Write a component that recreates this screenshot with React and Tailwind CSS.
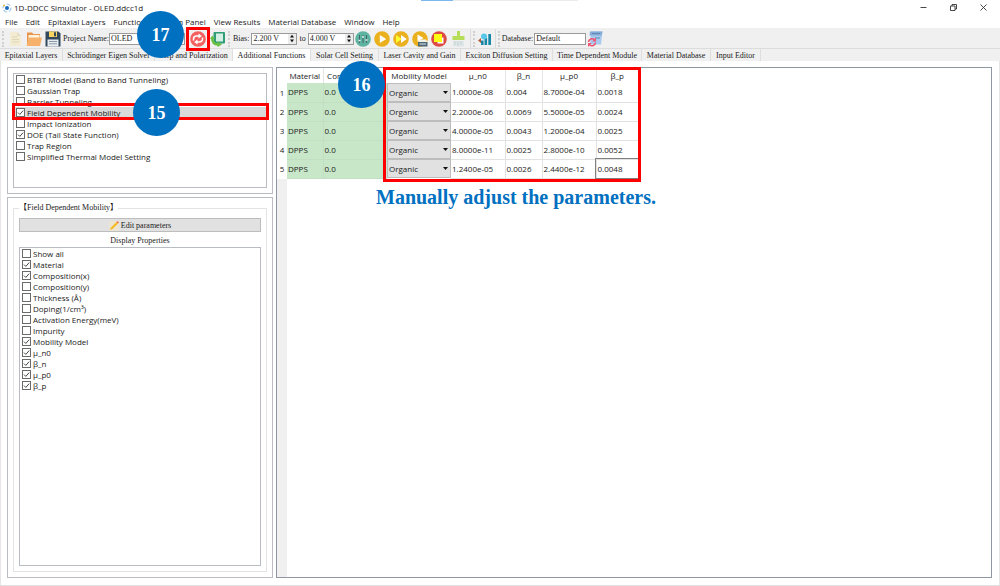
import React, { useState } from 'react';

const menus = [
  'File', 'Edit', 'Epitaxial Layers', 'Functions', 'Design Panel',
  'View Results', 'Material Database', 'Window', 'Help'
];

const tabs = [
  { label: 'Epitaxial Layers', width: 'w-[63px]' },
  { label: 'Schrödinger Eigen Solver', width: 'w-[92px]' },
  { label: 'Step and Polarization', width: 'w-[78px]' },
  { label: 'Additional Functions', width: 'w-[78px]' },
  { label: 'Solar Cell Setting', width: 'w-[68px]' },
  { label: 'Laser Cavity and Gain', width: 'w-[82px]' },
  { label: 'Exciton Diffusion Setting', width: 'w-[92px]' },
  { label: 'Time Dependent Module', width: 'w-[89px]' },
  { label: 'Material Database', width: 'w-[69px]' },
  { label: 'Input Editor', width: 'w-[50px]' }
];

const functionList = [
  { label: 'BTBT Model (Band to Band Tunneling)', checked: false },
  { label: 'Gaussian Trap', checked: false },
  { label: 'Barrier Tunneling', checked: false },
  { label: 'Field Dependent Mobility', checked: true, step: '15' },
  { label: 'Impact Ionization', checked: false },
  { label: 'DOE (Tail State Function)', checked: true },
  { label: 'Trap Region', checked: false },
  { label: 'Simplified Thermal Model Setting', checked: false }
];

const propertyList = [
  { label: 'Show all', checked: false },
  { label: 'Material', checked: true },
  { label: 'Composition(x)', checked: true },
  { label: 'Composition(y)', checked: false },
  { label: 'Thickness (Å)', checked: false },
  { label: 'Doping(1/cm³)', checked: false },
  { label: 'Activation Energy(meV)', checked: false },
  { label: 'Impurity', checked: false },
  { label: 'Mobility Model', checked: true },
  { label: 'μ_n0', checked: true },
  { label: 'β_n', checked: true },
  { label: 'μ_p0', checked: true },
  { label: 'β_p', checked: true }
];

const layers = [
  { material: 'DPPS', comp: '0.0', values: ['1.0000e-08', '0.004', '8.7000e-04', '0.0018'] },
  { material: 'DPPS', comp: '0.0', values: ['2.2000e-06', '0.0069', '5.5000e-05', '0.0024'] },
  { material: 'DPPS', comp: '0.0', values: ['4.0000e-05', '0.0043', '1.2000e-04', '0.0025'] },
  { material: 'DPPS', comp: '0.0', values: ['8.0000e-11', '0.0025', '2.8000e-10', '0.0052'] },
  { material: 'DPPS', comp: '0.0', values: ['1.2400e-05', '0.0026', '2.4400e-12', '0.0048'] }
];

const Step = ({ n, className }) => (
  <div className={`absolute z-20 flex size-[47px] items-center justify-center rounded-full bg-[#0070c0] font-['Liberation_Serif',serif] text-[18px] font-bold text-white ${className}`}>
    {n}
  </div>
);

const CheckRow = ({ item }) => {
  const [checked, setChecked] = useState(item.checked);
  return (
    <li className={`relative ${item.step ? 'bg-[#d9d9d9]' : ''}`}>
      <label className="flex h-[11px] items-center gap-[2px] pl-[2px] whitespace-nowrap">
        <span className="relative size-[9px] shrink-0">
          <input
            type="checkbox"
            checked={checked}
            onChange={(e) => setChecked(e.target.checked)}
            className="peer block size-[9px] appearance-none border border-[#6a6a6a] bg-white"
          />
          <svg viewBox="0 0 9 9" className="pointer-events-none absolute inset-0 hidden size-[9px] peer-checked:block">
            <path d="M2 4.6 3.8 6.4 7.2 2.6" fill="none" stroke="#333" strokeWidth="0.9" />
          </svg>
        </span>
        {item.label}
      </label>
      {item.step && (
        <>
          <div className="pointer-events-none absolute -top-[4px] -right-[3px] -bottom-[2px] -left-[2px] z-10 border-[3px] border-[#ff0000]" />
          <Step n={item.step} className="-top-[18px] left-[119px]" />
        </>
      )}
    </li>
  );
};

const Grip = () => (
  <span className="h-[16px] w-[3px] shrink-0 border-l-2 border-dotted border-[#d0d0d0]" />
);

const Spin = ({ value, label }) => (
  <span className="flex h-[12px] w-[46px] shrink-0 border border-[#9a9a9a] bg-white">
    <input aria-label={label} defaultValue={value} className="w-0 min-w-0 flex-1 px-px outline-none" />
    <span className="flex w-[8px] flex-col bg-[#ececec]">
      <button aria-label="Increase" className="flex flex-1 items-center justify-center">
        <svg viewBox="0 0 6 4" className="h-[4px] w-[6px]"><path d="M1 3.5 3 .8 5 3.5Z" fill="#111" /></svg>
      </button>
      <button aria-label="Decrease" className="flex flex-1 items-center justify-center">
        <svg viewBox="0 0 6 4" className="h-[4px] w-[6px]"><path d="M1 .5 3 3.2 5 .5Z" fill="#111" /></svg>
      </button>
    </span>
  </span>
);

const ToolButton = ({ label, children }) => (
  <button aria-label={label} className="size-[16px] shrink-0">
    <svg viewBox="0 0 16 16" className="size-[16px]">{children}</svg>
  </button>
);

const NewIcon = () => (
  <>
    <path d="M3 1h7l4 4v10H3z" fill="#f3ecd2" />
    <path d="M10 1l4 4h-4z" fill="#e3dcc0" />
    <path d="M5 6h5M5 8.5h7M5 11h7" stroke="#ddd5b6" />
  </>
);

const FolderIcon = () => (
  <>
    <path d="M1 1.5h5l1.5 1.5H14v11H1z" fill="#e8954b" />
    <path d="M2.5 4h11v5h-11z" fill="#fff3dc" />
    <path d="M2.8 6.5H16L14 15H.5z" fill="#f6b26b" />
  </>
);

const SaveIcon = () => (
  <>
    <path d="M.5.5h13l2 2v13H.5z" fill="#34495e" />
    <path d="M4 .5h8v5.5H4z" fill="#f7d560" />
    <path d="M9 1.2h2v4H9z" fill="#34495e" />
    <path d="M2.5 8.5h11v7h-11z" fill="#e8edf2" />
    <path d="M4 10.5h8M4 12.8h8" stroke="#8a98a8" />
  </>
);

const RefreshIcon = () => (
  <>
    <circle cx="8" cy="8" r="7.8" fill="#f4605f" />
    <path d="M3.5 9.5V8a3 3 0 0 1 3-3H9M12.5 6.5V8a3 3 0 0 1-3 3H7" fill="none" stroke="#fff" strokeWidth="1.5" />
    <path d="M8.5 2.5 11.8 5 8.5 7.5zM7.5 8.5 4.2 11l3.3 2.5z" fill="#fff" />
  </>
);

const ReloadIcon = () => (
  <>
    <rect x="3.5" y="1" width="11.5" height="11.5" rx="1" fill="#2f9d78" />
    <rect x="6" y="2.5" width="7" height="8" fill="#d6efe4" />
    <path d="M2.2 7c0 4.500 2.500 6.500 6 6.500" fill="none" stroke="#67bf3f" strokeWidth="2.4" />
    <path d="M7.5 10.5 12 13.5 7.5 16zM0 8l2.300-3.500L4.800 8z" fill="#67bf3f" />
  </>
);

const SettingsIcon = () => (
  <>
    <circle cx="8" cy="8" r="7.8" fill="#5fb3a1" />
    <path d="M4.5 4v8M8 4v8M11.5 4v8" stroke="#44646c" strokeWidth="1" />
    <path d="M3.5 9.5h2M7 6h2M10.5 9h2" stroke="#e4efed" strokeWidth="1.5" />
  </>
);

const PlayIcon = () => (
  <>
    <circle cx="8" cy="8" r="7.8" fill="#eab01e" />
    <path d="M5.8 4v8l6.4-4z" fill="#fff" />
  </>
);

const ForwardIcon = () => (
  <>
    <circle cx="8" cy="8" r="7.8" fill="#eab01e" />
    <path d="M8 4v8l5.8-4z" fill="#fff" />
    <path d="M3 4v8l5.800-4z" fill="#ffff2e" />
  </>
);

const PlayListIcon = () => (
  <>
    <circle cx="8" cy="8" r="7.8" fill="#eab01e" />
    <path d="M5.5 3.5v7l6-3.500z" fill="#fff" />
    <path d="M6 11l1.5-2.500H14l1.500 2.500z" fill="#f1f1e6" />
    <path d="M6 11h9.500v4.500H6z" fill="#4d6676" />
    <path d="M7.5 13H14" stroke="#dfe8ee" />
  </>
);

const StopIcon = () => (
  <>
    <circle cx="8" cy="8" r="7.8" fill="#dd4b43" />
    <path d="M6.5 6.5h6v6h-6z" fill="#fff" />
    <path d="M3 3h8v8H3z" fill="#ffff14" />
  </>
);

const CleanIcon = () => (
  <>
    <path d="M7 0h3v5h4.500v4h-12V5H7z" fill="#b5dd57" />
    <path d="M3 10h11v5.500H3z" fill="#dfe6e8" />
    <path d="M5 10v4M8 10v5M11 10v4" stroke="#c3d0d4" />
  </>
);

const ChartIcon = () => (
  <>
    <path d="M4 9.500h2.600V14H4zM7.500 7h2.600v7H7.500zM11.300 3H14v11h-2.700z" fill="#1687a7" />
    <circle cx="7" cy="5.5" r="3" fill="#58c7e8" />
    <path d="M1 9.500l3-2.500v5z" fill="#b4583a" />
  </>
);

const DatabaseIcon = () => (
  <>
    <path d="M4 .5h11.500L14 13.500H3z" fill="#a9c9ef" />
    <path d="M3 .5h12.500l-1 4H2.500z" fill="#85acd6" />
    <path d="M5 2.500h8M8 7h5" stroke="#5f88b3" />
    <path d="M1.500 11a3.500 3.500 0 0 1 6-2.200M8.500 11.500a3.500 3.500 0 0 1-6 2.200" fill="none" stroke="#ef5571" strokeWidth="1.6" />
    <path d="M9 6.500v4H5.200zM1 16v-4h3.800z" fill="#ef5571" />
  </>
);

const Toolbar = () => (
  <div className="relative flex h-[21px] items-center border-b border-[#dcdcdc] bg-[#f0f0f0] pt-px pl-[2px] font-['Liberation_Serif',serif] whitespace-nowrap">
    <Grip />
    <div className="flex items-center gap-[3px] pl-[2px]">
      <ToolButton label="New"><NewIcon /></ToolButton>
      <ToolButton label="Open"><FolderIcon /></ToolButton>
      <ToolButton label="Save"><SaveIcon /></ToolButton>
    </div>
    <label className="flex w-[124px] items-center pl-[2px]">
      Project Name:
      <input defaultValue="OLED" className="h-[12px] w-0 min-w-0 flex-1 border border-[#9a9a9a] bg-white px-px outline-none" />
    </label>
    <div className="flex items-center gap-[4px] pl-[5px]">
      <div className="relative flex">
        <ToolButton label="Update"><RefreshIcon /></ToolButton>
        <div className="pointer-events-none absolute -inset-[4px] z-10 border-[3px] border-[#ff0000]" />
      </div>
      <ToolButton label="Reload"><ReloadIcon /></ToolButton>
    </div>
    <div className="flex items-center gap-[2px] pl-[2px]">
      <Grip />
      <span>Bias:</span>
      <Spin label="Bias from" value="2.200 V" />
      to
      <Spin label="Bias to" value="4.000 V" />
    </div>
    <div className="flex items-center gap-[3px] pr-[4px] pl-px">
      <ToolButton label="Settings"><SettingsIcon /></ToolButton>
      <ToolButton label="Run"><PlayIcon /></ToolButton>
      <ToolButton label="Run all"><ForwardIcon /></ToolButton>
      <ToolButton label="Run list"><PlayListIcon /></ToolButton>
      <ToolButton label="Stop"><StopIcon /></ToolButton>
      <ToolButton label="Clean"><CleanIcon /></ToolButton>
    </div>
    <div className="flex h-full items-center gap-px border-x border-[#dcdcdc] px-[2px]">
      <Grip />
      <ToolButton label="Chart"><ChartIcon /></ToolButton>
    </div>
    <div className="flex items-center gap-px pl-[2px]">
      <Grip />
      <label className="flex items-center gap-px">
        Database:
        <input defaultValue="Default" className="h-[12px] w-[52px] border border-[#9a9a9a] bg-white px-px outline-none" />
      </label>
      <ToolButton label="Refresh database"><DatabaseIcon /></ToolButton>
    </div>
    <Step n="17" className="-top-[17px] left-[137px]" />
  </div>
);

const ParameterTable = () => (
  <div className="relative w-[361px]">
    <table className="w-full table-fixed border-collapse text-left">
      <colgroup>
        <col className="w-[10px]" />
        <col className="w-[36px]" />
        <col className="w-[64px]" />
        <col className="w-[64px]" />
        <col className="w-[54px]" />
        <col className="w-[37px]" />
        <col className="w-[54px]" />
        <col className="w-[42px]" />
      </colgroup>
      <thead>
        <tr className="h-[15px] text-center">
          <th />
          <th className="border-r border-[#e5e5e5] font-normal">Material</th>
          <th className="font-normal">Composition(x)</th>
          <th className="font-normal">Mobility Model</th>
          <th className="border-r border-[#e5e5e5] font-normal">μ_n0</th>
          <th className="border-r border-[#e5e5e5] font-normal">β_n</th>
          <th className="border-r border-[#e5e5e5] font-normal">μ_p0</th>
          <th className="font-normal">β_p</th>
        </tr>
      </thead>
      <tbody>
        {layers.map((row, i) => (
          <tr key={i} className="h-[19px]">
            <th className="text-center font-normal">{i + 1}</th>
            <td className="border-r border-b border-[#c3dfc3] bg-[#c8e6c8] pl-px">{row.material}</td>
            <td className="border-b border-[#c3dfc3] bg-[#c8e6c8] pl-px">{row.comp}</td>
            <td className="p-0">
              <span className="relative block">
                <select aria-label="Mobility model" className="block h-[19px] w-full appearance-none border border-[#bdbdbd] bg-[#e1e1e1] pl-px">
                  <option>Organic</option>
                </select>
                <svg viewBox="0 0 5 3" className="pointer-events-none absolute top-[8px] right-[3px] h-[3px] w-[5px]">
                  <path d="M0 0h5L2.5 3z" fill="#111" />
                </svg>
              </span>
            </td>
            {row.values.map((value, j) => (
              <td
                key={j}
                className={`border-r border-b border-[#e2e2e2] pl-px ${i === 4 && j === 3 ? 'outline outline-[#808080]' : ''}`}
              >
                {value}
              </td>
            ))}
          </tr>
        ))}
      </tbody>
    </table>
    <div className="pointer-events-none absolute -top-px -right-[3px] -bottom-[3px] left-[106px] z-10 border-[3px] border-[#ff0000]" />
    <Step n="16" className="-top-[7px] left-[61px]" />
  </div>
);

const App = () => {
  const [activeTab, setActiveTab] = useState('Additional Functions');

  return (
    <div className="flex h-screen flex-col overflow-hidden border-b border-[#e0e0e0] bg-white font-['Open_Sans','Noto_Sans',sans-serif] text-[8px] leading-[10px] text-[#1a1a1a]">
      {/* Title bar */}
      <header className="relative flex h-[15px] items-center justify-between pl-[2px]">
        <div className="absolute top-0 left-[421px] flex h-px w-[157px] bg-[#ececec]">
          <div className="w-[32px] bg-[#7ab8ee]" />
        </div>
        <div className="flex items-center gap-[2px]">
          <svg viewBox="0 0 10 10" className="size-[10px]">
            <circle cx="5" cy="5" r="4" fill="none" stroke="#9cc9ee" strokeWidth="1.2" strokeDasharray="4 2" />
            <circle cx="5" cy="5" r="2" fill="#1769c4" />
            <circle cx="2" cy="2.5" r="1" fill="#f0bd37" />
          </svg>
          <h1>1D-DDCC Simulator - OLED.ddcc1d</h1>
        </div>
        <div className="flex gap-[21px] pr-[12px]">
          <button aria-label="Minimize" className="size-[9px]">
            <svg viewBox="0 0 9 9"><path d="M1.5 4.5h6" stroke="#333" strokeWidth="0.9" /></svg>
          </button>
          <button aria-label="Restore" className="size-[9px]">
            <svg viewBox="0 0 9 9" fill="none" stroke="#333" strokeWidth="0.9"><path d="M1.5 3H6v4.500H1.500zM3 3V1.500h4.500V6H6" /></svg>
          </button>
          <button aria-label="Close" className="size-[9px]">
            <svg viewBox="0 0 9 9"><path d="M1.5 1.5l6 6M7.5 1.5l-6 6" stroke="#333" strokeWidth="0.9" /></svg>
          </button>
        </div>
      </header>

      {/* Menu bar */}
      <nav className="flex h-[13px] items-center gap-[8px] pl-[5px] whitespace-nowrap">
        {menus.map((menu) => (
          <button key={menu}>{menu}</button>
        ))}
      </nav>

      <Toolbar />

      {/* Tabs */}
      <div role="tablist" className="flex h-[12px] bg-[#f0f0f0] font-['Liberation_Serif',serif] whitespace-nowrap">
        {tabs.map((tab) => (
          <button
            key={tab.label}
            role="tab"
            aria-selected={tab.label === activeTab}
            onClick={() => setActiveTab(tab.label)}
            className={`flex items-center justify-center border-r border-[#dedede] pt-[2px] ${tab.width} ${tab.label === activeTab ? 'bg-white' : ''}`}
          >
            {tab.label}
          </button>
        ))}
      </div>

      <main className="flex min-h-0 flex-1 gap-[3px] border-x border-[#e5e5e5] pt-[6px] pr-[7px] pb-[7px] pl-[6px]">
        <aside className="flex w-[266px] shrink-0 flex-col gap-[3px]">
          <section className="h-[127px] border border-[#b9bcc3] p-[5px]">
            <ul className="h-full border border-[#b9bcc3]">
              {functionList.map((item) => (
                <CheckRow key={item.label} item={item} />
              ))}
            </ul>
          </section>

          <section className="flex min-h-0 flex-1 flex-col border border-[#b9bcc3] p-[5px]">
            <fieldset className="flex min-h-0 flex-1 flex-col border border-[#e3e3e3] px-[5px] pb-[5px]">
              <legend className="font-['Liberation_Serif','Noto_Sans_CJK_TC',serif]">【Field Dependent Mobility】</legend>
              <button className="mt-[5px] flex h-[14px] shrink-0 items-center justify-center gap-[2px] border border-[#bdbdbd] bg-[#e1e1e1] pt-px font-['Liberation_Serif',serif]">
                <svg viewBox="0 0 10 10" className="size-[10px]">
                  <path d="M0 0h10v10H0z" fill="#ece5d2" />
                  <path d="M1 9l1-2.500L7.500 1 9 2.500 3.500 8z" fill="#f5b921" />
                  <path d="M7.5 1 8.5 0 10 1.5 9 2.5z" fill="#ee6a5b" />
                </svg>
                Edit parameters
              </button>
              <p className="pt-[4px] pb-px text-center font-['Liberation_Serif',serif]">Display Properties</p>
              <ul className="min-h-0 flex-1 border border-[#b9bcc3]">
                {propertyList.map((item) => (
                  <CheckRow key={item.label} item={item} />
                ))}
              </ul>
            </fieldset>
          </section>
        </aside>

        <section className="flex min-w-0 flex-1 flex-col border border-[#8f97a3]">
          <ParameterTable />
          <div className="flex min-h-0 flex-1">
            <div className="w-[10px] bg-[#f0f0f0]" />
            <p className="pt-[6px] pl-[89px] font-['Liberation_Serif',serif] text-[20px] leading-[24px] font-bold text-[#0070c0]">
              Manually adjust the parameters.
            </p>
          </div>
        </section>
      </main>
    </div>
  );
};

export default App;
